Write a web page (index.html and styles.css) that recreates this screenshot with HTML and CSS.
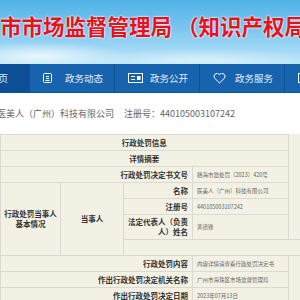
FILE: index.html
```html
<!DOCTYPE html>
<html lang="zh-CN">
<head>
    <meta charset="UTF-8">
    <title>行政处罚信息</title>
    <link rel="stylesheet" href="styles.css">
</head>
<body>

<div class="banner">
    <h1 class="site-title">市市场监督管理局 （知识产权局）</h1>
</div>

<div class="nav">
    <div class="nav-item home"><span>首页</span></div>
    <div class="nav-item">
        <svg class="icon icon-news" width="9" height="10" viewBox="0 0 9 10"><rect x="0.5" y="0.5" width="8" height="9" rx="1" fill="none" stroke="#fff"/><path d="M3 3.5h3M3 5.5h3M2.5 7.5h4" stroke="#fff" fill="none"/></svg>
        <span>政务动态</span>
    </div>
    <div class="nav-item">
        <svg class="icon icon-open" width="15" height="10" viewBox="0 0 15 10"><rect x="0.5" y="0.5" width="14" height="9" fill="none" stroke="#fff"/><path d="M3 3.5h4M3 6.5h4" stroke="#fff"/><rect x="9" y="3" width="3.5" height="4" fill="#fff"/></svg>
        <span>政务公开</span>
    </div>
    <div class="nav-item">
        <svg class="icon icon-service" width="13" height="11" viewBox="0 0 13 11"><path d="M6.5 10 L1.6 5.2 A2.8 2.8 0 0 1 6.5 1.6 A2.8 2.8 0 0 1 11.4 5.2 Z" fill="none" stroke="#fff"/></svg>
        <span>政务服务</span>
    </div>
    <div class="nav-item">
        <svg class="icon icon-talk" width="12" height="10" viewBox="0 0 12 10"><rect x="0.5" y="0.5" width="11" height="9" fill="none" stroke="#fff"/></svg>
        <span>互动交流</span>
    </div>
</div>

<div class="info">
    <span>医美人（广州）科技有限公司</span>
    <span class="reg">注册号：440105003107242</span>
</div>

<table class="detail">
    <colgroup>
        <col class="c1"><col class="c2"><col class="c3"><col>
    </colgroup>
    <tr><td colspan="4" class="title">行政处罚信息</td></tr>
    <tr><td colspan="4" class="title">详情摘要</td></tr>
    <tr><td colspan="3" class="label">行政处罚决定书文号</td><td class="value">穗海市监处罚〔2023〕420号</td></tr>
    <tr>
        <td rowspan="4" class="group">行政处罚当事人<br>基本情况</td>
        <td rowspan="4" class="group">当事人</td>
        <td class="label">名称</td><td class="value">医美人（广州）科技有限公司</td>
    </tr>
    <tr><td class="label">注册号</td><td class="value">440105003107242</td></tr>
    <tr class="double"><td class="label">法定代表人（负责人）姓名</td><td class="value">黄德锋</td></tr>
    <tr><td colspan="3" class="label">违法行为类型</td><td class="value">违反广告综合性法律法规规章的违法行为</td></tr>
    <tr><td colspan="3" class="label">行政处罚内容</td><td class="value">内容详情请查看行政处罚决定书</td></tr>
    <tr><td colspan="3" class="label">作出行政处罚决定机关名称</td><td class="value">广州市海珠区市场监督管理局</td></tr>
    <tr><td colspan="3" class="label">作出行政处罚决定日期</td><td class="value">2023年07月13日</td></tr>
</table>

</body>
</html>
```

FILE: styles.css
```css
body {
    margin: 0;
    padding: 0;
    width: 300px;
    height: 300px;
    overflow: hidden;
    background: #fff;
    font-family: "Noto Sans CJK SC", "Noto Sans", sans-serif;
}
.banner {
    height: 64px;
    overflow: hidden;
    background:
        radial-gradient(ellipse 90px 14px at 40px 56px, rgba(255,255,255,0.75), rgba(255,255,255,0)),
        radial-gradient(ellipse 120px 12px at 200px 60px, rgba(255,255,255,0.5), rgba(255,255,255,0)),
        linear-gradient(#4fb2e8, #7cc6f0 45%, #a9dcf6 85%, #b8e5f8);
}
.site-title {
    margin: 0;
    padding-top: 12px;
    font-size: 21.5px;
    font-weight: bold;
    line-height: 28px;
    color: #e5121c;
    white-space: nowrap;
    text-shadow: 0 0 2px #fff, 0 0 2px #fff;
}
.nav {
    display: flex;
    height: 28px;
    background: #1763ae;
    border-bottom: 1px solid #0f5499;
    white-space: nowrap;
}
.nav-item {
    flex: 0 0 85px;
    box-sizing: border-box;
    display: flex;
    align-items: center;
    padding-left: 13px;
    border-right: 1px solid #0d5197;
    color: #e6eef8;
    font-size: 9.5px;
}
.nav-item.home {
    margin-left: -55px;
    justify-content: flex-end;
    padding-right: 21px;
    background: #0c4f97;
}
.icon {
    flex: 0 0 auto;
}
.icon-news { margin-right: 13px; }
.icon-open { margin-right: 7px; }
.icon-service { margin-right: 9px; }
.icon-talk { margin-right: 10px; }
.info {
    margin: 15px 0 0 -3px;
    height: 26px;
    font-size: 9px;
    line-height: 12px;
    color: #666;
    white-space: nowrap;
}
.info .reg {
    margin-left: 8px;
}
.detail {
    width: 480px;
    border-collapse: collapse;
    table-layout: fixed;
    background: #f2f1e4;
}
.c1 { width: 60px; }
.c2 { width: 63px; }
.c3 { width: 69px; }
.detail td {
    border: 1px solid #dad9d2;
    height: 15px;
    padding: 0 4px;
    font-size: 7.5px;
    line-height: 10px;
    color: #333;
    white-space: nowrap;
    overflow: hidden;
}
.detail .title {
    text-align: center;
    font-weight: bold;
}
.detail .label {
    text-align: right;
    font-weight: bold;
}
.detail .group {
    text-align: center;
    font-weight: bold;
    padding: 0;
}
.detail .value {
    font-size: 5.5px;
    color: #666;
}
.detail .double td {
    height: 24px;
}
.detail .double .label {
    white-space: normal;
}
```
